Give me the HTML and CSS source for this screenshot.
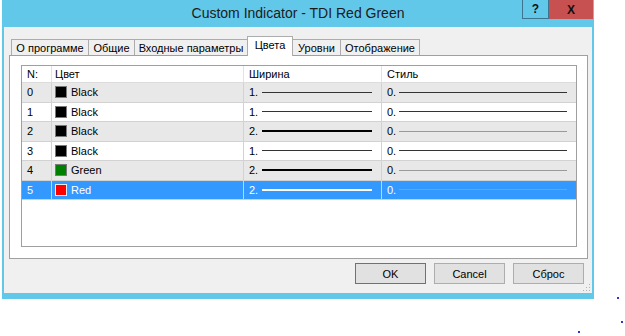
FILE: index.html
```html
<!DOCTYPE html>
<html>
<head>
<meta charset="utf-8">
<link rel="stylesheet" href="styles.css">
</head>
<body>
<div class="window">
  <div class="titlebar">
    <div class="tb-spacer"></div>
    <div class="title">Custom Indicator - TDI Red Green</div>
    <div class="controls">
      <div class="btn-help">?</div>
      <div class="btn-close">X</div>
    </div>
  </div>
  <div class="client">
    <div class="tabs">
      <div class="tab t1">О программе</div>
      <div class="tab t2">Общие</div>
      <div class="tab t3">Входные параметры</div>
      <div class="tab t4 active">Цвета</div>
      <div class="tab t5">Уровни</div>
      <div class="tab t6">Отображение</div>
    </div>
    <div class="panel">
      <div class="grid">
        <div class="row head">
          <div class="c c1">N:</div>
          <div class="c c2">Цвет</div>
          <div class="c c3">Ширина</div>
          <div class="c c4">Стиль</div>
        </div>
        <div class="row even">
          <div class="c c1">0</div>
          <div class="c c2"><span class="sw black"></span>Black</div>
          <div class="c c3">1.<span class="line wl dark"></span></div>
          <div class="c c4">0.<span class="line sl dark"></span></div>
        </div>
        <div class="row">
          <div class="c c1">1</div>
          <div class="c c2"><span class="sw black"></span>Black</div>
          <div class="c c3">1.<span class="line wl dark"></span></div>
          <div class="c c4">0.<span class="line sl dark"></span></div>
        </div>
        <div class="row even">
          <div class="c c1">2</div>
          <div class="c c2"><span class="sw black"></span>Black</div>
          <div class="c c3">2.<span class="line wl thick"></span></div>
          <div class="c c4">0.<span class="line sl light"></span></div>
        </div>
        <div class="row">
          <div class="c c1">3</div>
          <div class="c c2"><span class="sw black"></span>Black</div>
          <div class="c c3">1.<span class="line wl dark"></span></div>
          <div class="c c4">0.<span class="line sl dark"></span></div>
        </div>
        <div class="row even">
          <div class="c c1">4</div>
          <div class="c c2"><span class="sw green"></span>Green</div>
          <div class="c c3">2.<span class="line wl thick"></span></div>
          <div class="c c4">0.<span class="line sl light"></span></div>
        </div>
        <div class="row selected">
          <div class="c c1">5</div>
          <div class="c c2"><span class="sw red"></span>Red</div>
          <div class="c c3">2.<span class="line wl thick white"></span></div>
          <div class="c c4">0.<span class="line sl light"></span></div>
        </div>
      </div>
    </div>
    <div class="buttons">
      <div class="btn default">OK</div>
      <div class="btn">Cancel</div>
      <div class="btn">Сброс</div>
    </div>
    <svg class="grip" width="8" height="8" viewBox="0 0 8 8">
      <rect x="6" y="0" width="1" height="1" fill="#b0b0b0"/>
      <rect x="3" y="3" width="1" height="1" fill="#b0b0b0"/>
      <rect x="6" y="3" width="1" height="1" fill="#b0b0b0"/>
      <rect x="0" y="6" width="1" height="1" fill="#b0b0b0"/>
      <rect x="3" y="6" width="1" height="1" fill="#b0b0b0"/>
      <rect x="6" y="6" width="1" height="1" fill="#b0b0b0"/>
    </svg>
  </div>
</div>
<span class="dot d1"></span>
<span class="dot d2"></span>
<span class="dot d3"></span>
</body>
</html>
```
FILE: styles.css
```css
body {
  margin: 0;
  background: #fff;
  font-family: "Liberation Sans", Arial, sans-serif;
  font-size: 11px;
  color: #000;
  width: 625px;
  height: 336px;
  overflow: hidden;
  position: relative;
}

.window {
  margin-left: 2px;
  width: 592px;
  height: 299px;
  background: #62c8ea;
  display: flex;
  flex-direction: column;
}

.titlebar {
  height: 27px;
  flex: none;
  display: grid;
  grid-template-columns: 72px 1fr 72px;
}

.title {
  text-align: center;
  font-size: 14px;
  line-height: 26px;
  color: #1b1b1b;
}

.controls {
  display: flex;
  align-items: flex-start;
}

.btn-help {
  width: 27px;
  height: 19px;
  box-sizing: border-box;
  border: 1px solid #3d7590;
  border-top: none;
  display: flex;
  align-items: center;
  justify-content: center;
  font-weight: bold;
  font-size: 12px;
  color: #111;
}

.btn-close {
  width: 44px;
  height: 19px;
  background: #c75050;
  display: flex;
  align-items: center;
  justify-content: center;
  font-weight: bold;
  font-size: 12px;
  color: #111;
}

.client {
  flex: 1;
  margin: 0 2px 6px;
  background: #f0f0f0;
  display: flex;
  flex-direction: column;
  position: relative;
}

.tabs {
  display: flex;
  align-items: flex-end;
  height: 20px;
  margin-top: 9px;
  margin-bottom: -1px;
  padding-left: 7px;
  position: relative;
  z-index: 1;
}

.tab {
  height: 16px;
  margin-bottom: 1px;
  margin-right: -1px;
  box-sizing: border-box;
  border: 1px solid #acacac;
  border-bottom: none;
  background: #f0f0f0;
  display: flex;
  align-items: center;
  justify-content: center;
  white-space: nowrap;
}

.tab.active {
  height: 20px;
  margin-bottom: 0;
  background: #fff;
  align-items: flex-start;
  padding-top: 2px;
}

.t1 { width: 78px; }
.t2 { width: 47px; }
.t3 { width: 114px; }
.t4 { width: 46px; }
.t5 { width: 49px; }
.t6 { width: 80px; }

.panel {
  margin: 0 4px 0 5px;
  height: 204px;
  box-sizing: border-box;
  border: 1px solid #a0a0a0;
  background: #fff;
  padding: 9px 10px 11px 11px;
}

.grid {
  height: 182px;
  box-sizing: border-box;
  border: 1px solid #9f9f9f;
  background: #fff;
}

.row {
  display: grid;
  grid-template-columns: 29px 192px 138px 196px;
  height: 19.5px;
  box-sizing: border-box;
  border-bottom: 1px solid #d2d2d2;
  background: #fff;
}

.row.head {
  height: 17px;
  border-bottom: 1px solid #dcdcdc;
}

.row.even {
  background: #e8e8e8;
}

.row.selected {
  background: #3399ff;
  color: #fff;
  border-bottom-color: #b4d8fb;
}

.c {
  display: flex;
  align-items: center;
  padding-left: 5px;
  border-left: 1px solid #d2d2d2;
  white-space: nowrap;
}

.head .c {
  border-left-color: #e2e2e2;
}

.c1 {
  border-left: none;
}

.c2 {
  padding-left: 3px;
}

.sw {
  width: 12px;
  height: 12px;
  box-sizing: border-box;
  border: 1px solid #7a7a7a;
  margin-right: 4px;
}

.sw.black { background: #000; }
.sw.green { background: #008000; }
.sw.red { background: #ff0000; border-color: #e8e8e8; }

.line {
  display: block;
  height: 1px;
  margin-left: 4px;
}

.wl { width: 110px; }
.sl { width: 168px; margin-left: 3px; }

.dark { background: #333; }
.thick { height: 2px; background: #000; }
.thick.white { background: #fff; }
.light { background: #9a9a9a; }

.buttons {
  display: flex;
  justify-content: flex-end;
  gap: 8px;
  margin-top: 4px;
  padding-right: 8px;
}

.btn {
  width: 71px;
  height: 21px;
  box-sizing: border-box;
  border: 1px solid #adadad;
  background: #e1e1e1;
  display: flex;
  align-items: center;
  justify-content: center;
}

.btn.default {
  border-color: #3c7fb1;
}

.grip {
  position: absolute;
  right: 1px;
  bottom: 1px;
}

.dot {
  position: absolute;
  width: 2px;
  height: 2px;
  background: #2a35d0;
}

.d1 { left: 617px; top: 297px; }
.d2 { left: 621px; top: 321px; }
.d3 { left: 578px; top: 331px; }
```
